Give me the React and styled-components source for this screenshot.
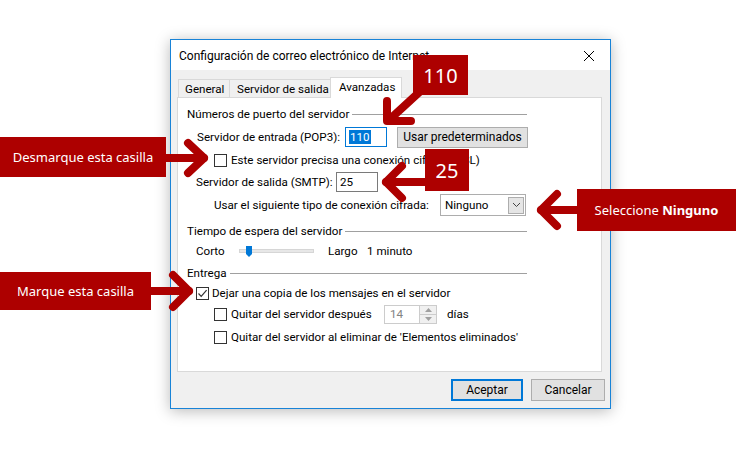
import React from 'react';
import styled, { createGlobalStyle } from 'styled-components';

const GlobalStyle = createGlobalStyle`
  html, body {
    margin: 0;
    padding: 0;
    background: #ffffff;
  }
  body {
    font-family: Roboto, "Noto Sans", sans-serif;
    font-size: 11.6px;
    color: #000000;
  }
`;

const Page = styled.div`
  position: relative;
  width: 736px;
  height: 453px;
  box-sizing: border-box;
  padding: 39px 0 0 170px;
  overflow: hidden;
`;

const Dialog = styled.div`
  width: 441px;
  box-sizing: border-box;
  border: 1px solid #1883d7;
  box-shadow: 0 2px 14px rgba(0, 0, 0, 0.28);
  display: flex;
  flex-direction: column;
  background: #f0f0f0;
`;

const TitleBar = styled.div`
  height: 30px;
  background: #ffffff;
  display: flex;
  align-items: center;
  justify-content: space-between;
  padding: 0 0 0 8px;
`;

const Title = styled.span`
  font-size: 12px;
  line-height: 30px;
  margin-top: 2px;
`;

const CloseButton = styled.div`
  width: 44px;
  height: 30px;
  display: flex;
  align-items: center;
  justify-content: center;
  margin-right: -1px;
  margin-top: 2px;
`;

const Body = styled.div`
  padding: 7px 7px 7px 6px;
  display: flex;
  flex-direction: column;
`;

const TabRow = styled.div`
  height: 21px;
  display: flex;
  align-items: flex-end;
  padding-left: 1px;
`;

const Tab = styled.div`
  width: ${(p) => p.$w}px;
  height: ${(p) => (p.$active ? 21 : 18)}px;
  margin-bottom: ${(p) => (p.$active ? 0 : 1)}px;
  margin-left: -1px;
  box-sizing: border-box;
  border: 1px solid #d9d9d9;
  border-bottom: none;
  background: ${(p) => (p.$active ? '#ffffff' : '#f0f0f0')};
  position: relative;
  z-index: ${(p) => (p.$active ? 2 : 1)};
  display: flex;
  align-items: center;
  padding-left: ${(p) => p.$pad}px;
  padding-bottom: ${(p) => (p.$active ? 2 : 0)}px;
  white-space: nowrap;
  &:first-child {
    margin-left: 0;
  }
`;

const Panel = styled.div`
  margin-top: -1px;
  width: 425px;
  height: 275px;
  box-sizing: border-box;
  border: 1px solid #d9d9d9;
  background: #ffffff;
  padding: 8px 0 0 9px;
  display: flex;
  flex-direction: column;
`;

const Legend = styled.div`
  width: 340px;
  height: 16px;
  margin-top: ${(p) => p.$mt || 0}px;
  display: flex;
  align-items: center;
  gap: 3px;
  white-space: nowrap;
  &::after {
    content: '';
    flex: 1;
    height: 1px;
    background: #a0a0a0;
    margin-top: 1px;
  }
`;

const Row = styled.div`
  height: ${(p) => p.$h}px;
  margin-top: ${(p) => p.$mt}px;
  padding-left: ${(p) => p.$indent}px;
  display: flex;
  align-items: center;
  white-space: nowrap;
`;

const Label = styled.span`
  display: inline-block;
  width: ${(p) => (p.$w ? `${p.$w}px` : 'auto')};
  flex-shrink: 0;
`;

const TextBox = styled.div`
  width: ${(p) => p.$w}px;
  height: ${(p) => p.$h}px;
  box-sizing: border-box;
  border: 1px solid ${(p) => (p.$focus ? '#0078d7' : '#7a7a7a')};
  background: #ffffff;
  display: flex;
  align-items: center;
  padding-left: 3px;
  flex-shrink: 0;
`;

const Selected = styled.span`
  background: #0078d7;
  color: #ffffff;
  padding: 0 1px;
  line-height: 14px;
`;

const Button = styled.div`
  width: ${(p) => p.$w}px;
  height: ${(p) => p.$h || 22}px;
  box-sizing: border-box;
  border: ${(p) => (p.$default ? '2px solid #0078d7' : '1px solid #adadad')};
  background: #e1e1e1;
  display: flex;
  align-items: center;
  justify-content: center;
  flex-shrink: 0;
  margin-left: ${(p) => p.$ml || 0}px;
  font-size: 12px;
`;

const Check = styled.span`
  width: 13px;
  height: 13px;
  box-sizing: border-box;
  border: 1px solid #333333;
  background: #ffffff;
  display: inline-flex;
  align-items: center;
  justify-content: center;
  flex-shrink: 0;
  margin-right: ${(p) => p.$gap}px;
`;

const Combo = styled.div`
  width: 86px;
  height: 22px;
  box-sizing: border-box;
  border: 1px solid #adadad;
  background: #ffffff;
  display: flex;
  align-items: center;
  justify-content: space-between;
  padding: 0 1px 0 4px;
`;

const ComboButton = styled.div`
  width: 16px;
  height: 17px;
  box-sizing: border-box;
  border: 1px solid #adadad;
  background: #e5e5e5;
  display: flex;
  align-items: center;
  justify-content: center;
`;

const Track = styled.div`
  position: relative;
  width: 75px;
  height: 4px;
  box-sizing: border-box;
  background: #e7e7e7;
  border: 1px solid #d6d6d6;
  flex-shrink: 0;
  margin-right: 14px;
`;

const Thumb = styled.svg`
  position: absolute;
  left: 6px;
  top: -4px;
`;

const Spin = styled.div`
  width: 53px;
  height: 19px;
  box-sizing: border-box;
  border: 1px solid #cccccc;
  background: #ffffff;
  display: flex;
  align-items: center;
  justify-content: space-between;
  padding-left: 5px;
  color: #838383;
  margin-right: 10px;
  flex-shrink: 0;
`;

const SpinButtons = styled.div`
  width: 16px;
  height: 17px;
  border-left: 1px solid #cccccc;
  display: flex;
  flex-direction: column;
  background: #f0f0f0;
`;

const SpinHalf = styled.div`
  flex: 1;
  display: flex;
  align-items: center;
  justify-content: center;
  border-top: ${(p) => (p.$bottom ? '1px solid #cccccc' : 'none')};
`;

const Footer = styled.div`
  display: flex;
  justify-content: flex-end;
  margin-top: 7px;
  margin-right: -2px;
`;

const Callout = styled.div`
  position: absolute;
  left: ${(p) => p.$x}px;
  top: ${(p) => p.$y}px;
  width: ${(p) => p.$w}px;
  height: ${(p) => p.$h}px;
  background: #ad0000;
  color: #ffffff;
  display: flex;
  align-items: center;
  justify-content: center;
  font-family: "Noto Sans", sans-serif;
  font-size: ${(p) => p.$size || 13}px;
  white-space: nowrap;
  z-index: 5;
`;

const Arrows = styled.svg`
  position: absolute;
  left: 0;
  top: 0;
  z-index: 4;
  pointer-events: none;
`;

const CheckMark = () => (
  <svg width="11" height="11" viewBox="0 0 11 11">
    <path d="M1.5 5.5 L4.2 8.3 L9.6 2.2" fill="none" stroke="#333" strokeWidth="1.2" />
  </svg>
);

const App = () => {
  return (
    <Page>
      <GlobalStyle />
      <Dialog>
        <TitleBar>
          <Title>Configuración de correo electrónico de Internet</Title>
          <CloseButton>
            <svg width="12" height="12" viewBox="0 0 12 12">
              <path d="M1 1 L11 11 M11 1 L1 11" stroke="#000" strokeWidth="1" />
            </svg>
          </CloseButton>
        </TitleBar>
        <Body>
          <TabRow>
            <Tab $w={52} $pad={6}>General</Tab>
            <Tab $w={102} $pad={7}>Servidor de salida</Tab>
            <Tab $w={72} $pad={8} $active>Avanzadas</Tab>
          </TabRow>
          <Panel>
            <Legend>Números de puerto del servidor</Legend>
            <Row $h={22} $mt={4} $indent={10}>
              <Label $w={148}>Servidor de entrada (POP3):</Label>
              <TextBox $w={42} $h={20} $focus>
                <Selected>110</Selected>
              </TextBox>
              <Button $w={131} $h={21} $ml={10}>Usar predeterminados</Button>
            </Row>
            <Row $h={18} $mt={3} $indent={27}>
              <Check $gap={4} />
              <Label>Este servidor precisa una conexión cifrada (SSL)</Label>
            </Row>
            <Row $h={22} $mt={2} $indent={9}>
              <Label $w={140}>Servidor de salida (SMTP):</Label>
              <TextBox $w={42} $h={20}>25</TextBox>
            </Row>
            <Row $h={22} $mt={1} $indent={27}>
              <Label $w={226}>Usar el siguiente tipo de conexión cifrada:</Label>
              <Combo>
                <span>Ninguno</span>
                <ComboButton>
                  <svg width="9" height="6" viewBox="0 0 9 6">
                    <path d="M1 1 L4.5 4.5 L8 1" fill="none" stroke="#444" strokeWidth="1" />
                  </svg>
                </ComboButton>
              </Combo>
            </Row>
            <Legend $mt={7}>Tiempo de espera del servidor</Legend>
            <Row $h={16} $mt={4} $indent={9}>
              <Label $w={43}>Corto</Label>
              <Track>
                <Thumb width="6" height="11" viewBox="0 0 6 11">
                  <path d="M0 0 H6 V8 L3 11 L0 8 Z" fill="#0078d7" />
                </Thumb>
              </Track>
              <Label $w={39}>Largo</Label>
              <Label>1 minuto</Label>
            </Row>
            <Legend $mt={6}>Entrega</Legend>
            <Row $h={18} $mt={3} $indent={9}>
              <Check $gap={3}>
                <CheckMark />
              </Check>
              <Label>Dejar una copia de los mensajes en el servidor</Label>
            </Row>
            <Row $h={20} $mt={2} $indent={27}>
              <Check $gap={4} />
              <Label $w={153}>Quitar del servidor después</Label>
              <Spin>
                <span>14</span>
                <SpinButtons>
                  <SpinHalf>
                    <svg width="7" height="4" viewBox="0 0 7 4">
                      <path d="M0 4 L3.5 0 L7 4 Z" fill="#a0a0a0" />
                    </svg>
                  </SpinHalf>
                  <SpinHalf $bottom>
                    <svg width="7" height="4" viewBox="0 0 7 4">
                      <path d="M0 0 L3.5 4 L7 0 Z" fill="#a0a0a0" />
                    </svg>
                  </SpinHalf>
                </SpinButtons>
              </Spin>
              <Label>días</Label>
            </Row>
            <Row $h={18} $mt={4} $indent={27}>
              <Check $gap={4} />
              <Label>Quitar del servidor al eliminar de 'Elementos eliminados'</Label>
            </Row>
          </Panel>
          <Footer>
            <Button $w={72} $default>Aceptar</Button>
            <Button $w={74} $ml={8}>Cancelar</Button>
          </Footer>
        </Body>
      </Dialog>

      <Arrows width="736" height="453" viewBox="0 0 736 453">
        <g fill="none" stroke="#ad0000" strokeWidth="8" strokeLinecap="round" strokeLinejoin="round">
          <path d="M426 86 L389 120" />
          <path d="M387 101 V121 H411" />
          <path d="M160 158 H204" />
          <path d="M188 143 L204 158 L188 173" />
          <path d="M430 182 H386" />
          <path d="M402 166 L386 182 L402 198" />
          <path d="M580 210 H541" />
          <path d="M557 194 L541 210 L557 226" />
          <path d="M145 291 H189" />
          <path d="M173 275 L189 291 L173 307" />
        </g>
      </Arrows>

      <Callout $x={413} $y={55} $w={55} $h={40} $size={20}>110</Callout>
      <Callout $x={0} $y={137} $w={166} $h={40}>Desmarque esta casilla</Callout>
      <Callout $x={425} $y={149} $w={44} $h={42} $size={20}>25</Callout>
      <Callout $x={577} $y={189} $w={159} $h={42}>
        Seleccione&nbsp;<b>Ninguno</b>
      </Callout>
      <Callout $x={0} $y={272} $w={151} $h={38}>Marque esta casilla</Callout>
    </Page>
  );
};

export default App;
